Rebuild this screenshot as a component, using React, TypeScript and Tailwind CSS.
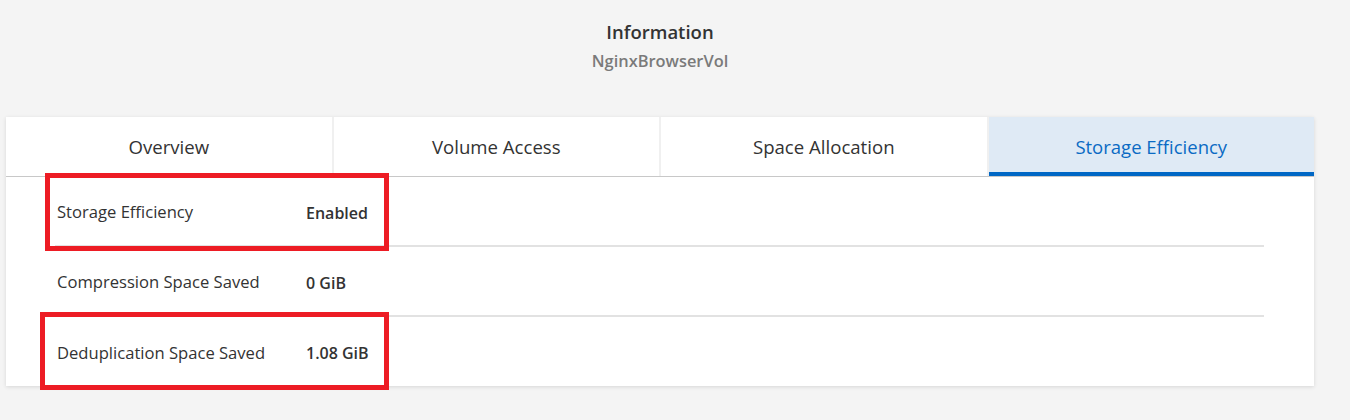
import React from "react";

const tabs = ["Overview", "Volume Access", "Space Allocation", "Storage Efficiency"];

const rows = [
  { label: "Storage Efficiency", value: "Enabled" },
  { label: "Compression Space Saved", value: "0 GiB" },
  { label: "Deduplication Space Saved", value: "1.08 GiB" },
];

export default function App() {
  return (
    <div
      className="relative w-[1350px] h-[420px] bg-[#f4f4f4] overflow-hidden"
      style={{ fontFamily: '"Open Sans", "Noto Sans", sans-serif' }}
    >
      <div className="ml-[6px] w-[1308px] flex flex-col items-center pt-[19px]">
        <div className="text-[18.5px] leading-[26px] font-semibold text-[#333]">Information</div>
        <div className="mt-[5px] text-[16.4px] leading-[22px] font-semibold text-[#7a7a7a]">NginxBrowserVol</div>
      </div>

      <div className="absolute left-[6px] top-[117px] w-[1308px] bg-white shadow-[0_1px_4px_rgba(0,0,0,0.12)]">
        <div className="flex gap-[2px] bg-[#f0f0f0] border-b border-[#c8c8c8]">
          {tabs.map((t, i) => {
            const active = i === 3;
            return (
              <div
                key={t}
                className={
                  active
                    ? "flex-1 h-[59px] flex items-center justify-center bg-[#dfeaf5] text-[#0a6ac4] text-[18.5px] font-medium border-b-4 border-[#0067c5] pt-[5px]"
                    : "flex-1 h-[59px] flex items-center justify-center bg-white text-[#333] text-[18.6px] pt-[1px]"
                }
              >
                {t}
              </div>
            );
          })}
        </div>
        <div className="pl-[49px] pr-[50px]">
          {rows.map((r, i) => (
            <div
              key={r.label}
              className={
                i < rows.length - 1
                  ? "h-[70px] flex items-center border-b-2 border-[#e2e2e2] pl-[2px] pt-[3px]"
                  : "h-[69px] flex items-center pl-[2px] pt-[3px]"
              }
            >
              <div className="w-[249px] text-[16.6px] text-[#333]">{r.label}</div>
              <div className="text-[16px] font-semibold text-[#333]">{r.value}</div>
            </div>
          ))}
        </div>
      </div>

      <div className="absolute left-[45px] top-[173px] w-[344px] h-[78px] border-[5px] border-[#ed1c24]" />
      <div className="absolute left-[40px] top-[312px] w-[349px] h-[78px] border-[5px] border-[#ed1c24]" />
    </div>
  );
}
